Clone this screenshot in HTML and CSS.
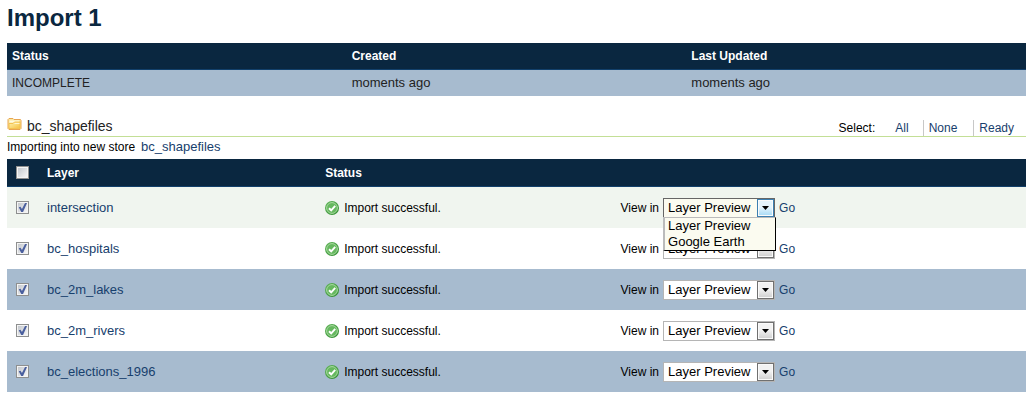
FILE: index.html
```html
<!DOCTYPE html>
<html lang="en">
<head>
<meta charset="utf-8">
<title>Import 1</title>
<link rel="stylesheet" href="styles.css">
</head>
<body>
<svg class="defs" aria-hidden="true">
  <defs>
    <linearGradient id="green" x1="0" y1="0" x2="1" y2="1">
      <stop offset="0" stop-color="#62b65b"/><stop offset="1" stop-color="#2d8a2c"/>
    </linearGradient>
    <linearGradient id="gold" x1="0" y1="0" x2="1" y2="1">
      <stop offset="0" stop-color="#fff3b0"/><stop offset="1" stop-color="#f5c142"/>
    </linearGradient>
    <symbol id="ok" viewBox="0 0 14 14">
      <circle cx="7" cy="7" r="7" fill="url(#green)"/>
      <circle cx="7" cy="7" r="5.4" fill="#66b85f" stroke="#a9dba1" stroke-width="1"/>
      <path d="M4 7.2 6.2 9.3 10.2 4.8" fill="none" stroke="#fff" stroke-width="1.9"/>
    </symbol>
    <symbol id="arrow" viewBox="0 0 7 4"><path d="M0 0h7L3.5 4z" fill="#000"/></symbol>
  </defs>
</svg>

<h1 class="title">Import 1</h1>

<table class="grid summary">
  <thead><tr><th>Status</th><th>Created</th><th>Last Updated</th></tr></thead>
  <tbody><tr><td>INCOMPLETE</td><td class="wide">moments ago</td><td class="wide">moments ago</td></tr></tbody>
</table>

<div class="task">
  <h2 class="task-name">
    <svg class="folder" viewBox="0 0 14 12" aria-hidden="true">
      <path d="M.5 10.5v-9l1-1h4l1 1h6.500l.5 1v8l-1 1h-11z" fill="#fce9a0" stroke="#e8a552"/>
      <path d="M2 2.500h9.500v2H2z" fill="#fffbe2"/>
      <path d="M1.500 10.500v-5h4l1.500-1.500h5.500v6.500z" fill="url(#gold)" stroke="#f3c253"/>
      <path d="M7 5.500h5" stroke="#fff7cc"/>
    </svg>
    bc_shapefiles
  </h2>
  <div class="select-bar">
    <span>Select:</span>
    <ul class="choices">
      <li><a href="#all">All</a></li>
      <li><a href="#none">None</a></li>
      <li><a href="#ready">Ready</a></li>
    </ul>
  </div>
</div>
<p class="store"><span>Importing into new store</span> <a class="wide" href="#store">bc_shapefiles</a></p>

<table class="grid layers">
  <colgroup><col class="c-check"><col class="c-layer"><col class="c-status"><col></colgroup>
  <thead><tr>
    <th><input class="check" type="checkbox" aria-label="Select all layers"></th>
    <th>Layer</th><th>Status</th><th></th>
  </tr></thead>
  <tbody>
    <tr class="hover">
      <td><input class="check" type="checkbox" aria-label="intersection" checked></td>
      <td><a class="wide" href="#intersection">intersection</a></td>
      <td><span class="state"><svg class="ok"><use href="#ok"/></svg>Import successful.</span></td>
      <td><div class="view"><label for="v1">View in</label>
        <span class="picker open"><select id="v1"><option>Layer Preview</option><option>Google Earth</option></select><span class="drop"><svg><use href="#arrow"/></svg></span>
          <ul class="menu" role="listbox" aria-label="View in"><li role="option">Layer Preview</li><li role="option">Google Earth</li></ul>
        </span><a href="#go">Go</a></div></td>
    </tr>
    <tr>
      <td><input class="check" type="checkbox" aria-label="bc_hospitals" checked></td>
      <td><a class="wide" href="#hospitals">bc_hospitals</a></td>
      <td><span class="state"><svg class="ok"><use href="#ok"/></svg>Import successful.</span></td>
      <td><div class="view"><label for="v2">View in</label>
        <span class="picker"><select id="v2"><option>Layer Preview</option><option>Google Earth</option></select><span class="drop"><svg><use href="#arrow"/></svg></span></span><a href="#go">Go</a></div></td>
    </tr>
    <tr class="alt">
      <td><input class="check" type="checkbox" aria-label="bc_2m_lakes" checked></td>
      <td><a class="wide" href="#lakes">bc_2m_lakes</a></td>
      <td><span class="state"><svg class="ok"><use href="#ok"/></svg>Import successful.</span></td>
      <td><div class="view"><label for="v3">View in</label>
        <span class="picker"><select id="v3"><option>Layer Preview</option><option>Google Earth</option></select><span class="drop"><svg><use href="#arrow"/></svg></span></span><a href="#go">Go</a></div></td>
    </tr>
    <tr>
      <td><input class="check" type="checkbox" aria-label="bc_2m_rivers" checked></td>
      <td><a class="wide" href="#rivers">bc_2m_rivers</a></td>
      <td><span class="state"><svg class="ok"><use href="#ok"/></svg>Import successful.</span></td>
      <td><div class="view"><label for="v4">View in</label>
        <span class="picker"><select id="v4"><option>Layer Preview</option><option>Google Earth</option></select><span class="drop"><svg><use href="#arrow"/></svg></span></span><a href="#go">Go</a></div></td>
    </tr>
    <tr class="alt">
      <td><input class="check" type="checkbox" aria-label="bc_elections_1996" checked></td>
      <td><a class="wide" href="#elections">bc_elections_1996</a></td>
      <td><span class="state"><svg class="ok"><use href="#ok"/></svg>Import successful.</span></td>
      <td><div class="view"><label for="v5">View in</label>
        <span class="picker"><select id="v5"><option>Layer Preview</option><option>Google Earth</option></select><span class="drop"><svg><use href="#arrow"/></svg></span></span><a href="#go">Go</a></div></td>
    </tr>
  </tbody>
</table>
</body>
</html>
```
FILE: styles.css
```css
* { box-sizing: border-box; }
body {
  margin: 0;
  padding: 4px 8px 8px 7px;
  background: #fff;
  color: #000;
  font: 12px/16px "Liberation Sans", Arial, sans-serif;
}
a { color: #17406d; text-decoration: none; }
ul { list-style: none; margin: 0; padding: 0; }
.defs { position: absolute; width: 0; height: 0; }
.wide { font-size: 13px; }

.title { margin: 0 0 11px; font-size: 24px; line-height: 28px; color: #0a2740; }

.grid { width: 100%; border-collapse: separate; border-spacing: 0; table-layout: fixed; }
.grid th {
  height: 27px;
  padding: 0 5px;
  background: #0a2740;
  border-bottom: 1px solid #12406b;
  color: #fff;
  text-align: left;
}
.grid td { padding: 0 5px; }
.summary td { height: 26px; background: #a7bbcf; color: #222; }

.task {
  display: flex;
  justify-content: space-between;
  align-items: flex-end;
  margin-top: 20px;
  border-bottom: 1px solid #c3df96;
}
.task-name { display: flex; align-items: center; gap: 5px; margin: 0; font-size: 14px; line-height: 20px; font-weight: normal; color: #222; }
.folder { width: 15px; height: 12px; margin-bottom: 4px; }
.select-bar { display: flex; align-items: flex-end; gap: 14px; padding-right: 6px; }
.choices { display: flex; }
.choices li { padding: 0 14px 0 6px; }
.choices li + li { padding: 0 16px 0 5px; border-left: 1px solid #c8c8c8; }
.choices li:last-child { padding-right: 6px; }

.store { display: flex; gap: 6px; margin: 0 0 4px; padding-top: 2px; }

.layers th { height: 28px; }
.layers td { height: 41px; }
.layers .alt td { background: #a7bbcf; }
.layers .hover td { background: #f0f5ef; }
.layers th:first-child, .layers td:first-child { padding: 0 0 0 9px; }
.c-check { width: 35px; }
.c-layer { width: 27.3%; }
.c-status { width: 28.5%; }

.check {
  appearance: none;
  display: block;
  position: relative;
  width: 13px;
  height: 13px;
  margin: 0;
  padding: 1px;
  border: 1px solid #8e8f8f;
  background: linear-gradient(135deg, #c4c8ce, #f6f6f6) content-box, #f4f4f4;
}
.check:checked::after {
  content: "";
  position: absolute;
  inset: 1px;
  background: #4a5f9e;
  clip-path: polygon(8% 48%, 28% 42%, 44% 66%, 78% 0, 100% 0, 56% 100%, 36% 100%);
}

.state { display: flex; align-items: center; gap: 5px; }
.ok { width: 14px; height: 14px; }

.view { display: flex; align-items: center; gap: 4px; padding-left: 5px; }
.picker {
  position: relative;
  display: flex;
  width: 112px;
  height: 20px;
  border: 1px solid #b5b5b5;
  background: #fff;
}
.picker select {
  appearance: none;
  flex: 1;
  min-width: 0;
  padding: 0 0 0 4px;
  border: 0;
  background: none;
  color: #000;
  font: 13px/18px "Liberation Sans", Arial, sans-serif;
}
.drop {
  display: flex;
  align-items: center;
  justify-content: center;
  width: 17px;
  border: 1px solid #707070;
  box-shadow: inset 0 0 0 1px #fafafa;
  background: linear-gradient(#f2f2f2 45%, #cfcfcf);
  pointer-events: none;
}
.drop svg { width: 7px; height: 4px; }
.open { border-color: #666; background: #fbfbf0; }
.open .drop { border-color: #3c7fb1; background: linear-gradient(#e5f4fc 45%, #a3d9f5); }
.menu {
  position: absolute;
  z-index: 1;
  top: 18px;
  left: -1px;
  width: 113px;
  border: solid #000;
  border-width: 1px 1px 1px 2px;
  border-top-color: #bbb;
  border-left-color: #bbb;
  background: #fbfbf0;
  font-size: 13px;
}
.menu li { padding-left: 3px; }
```
